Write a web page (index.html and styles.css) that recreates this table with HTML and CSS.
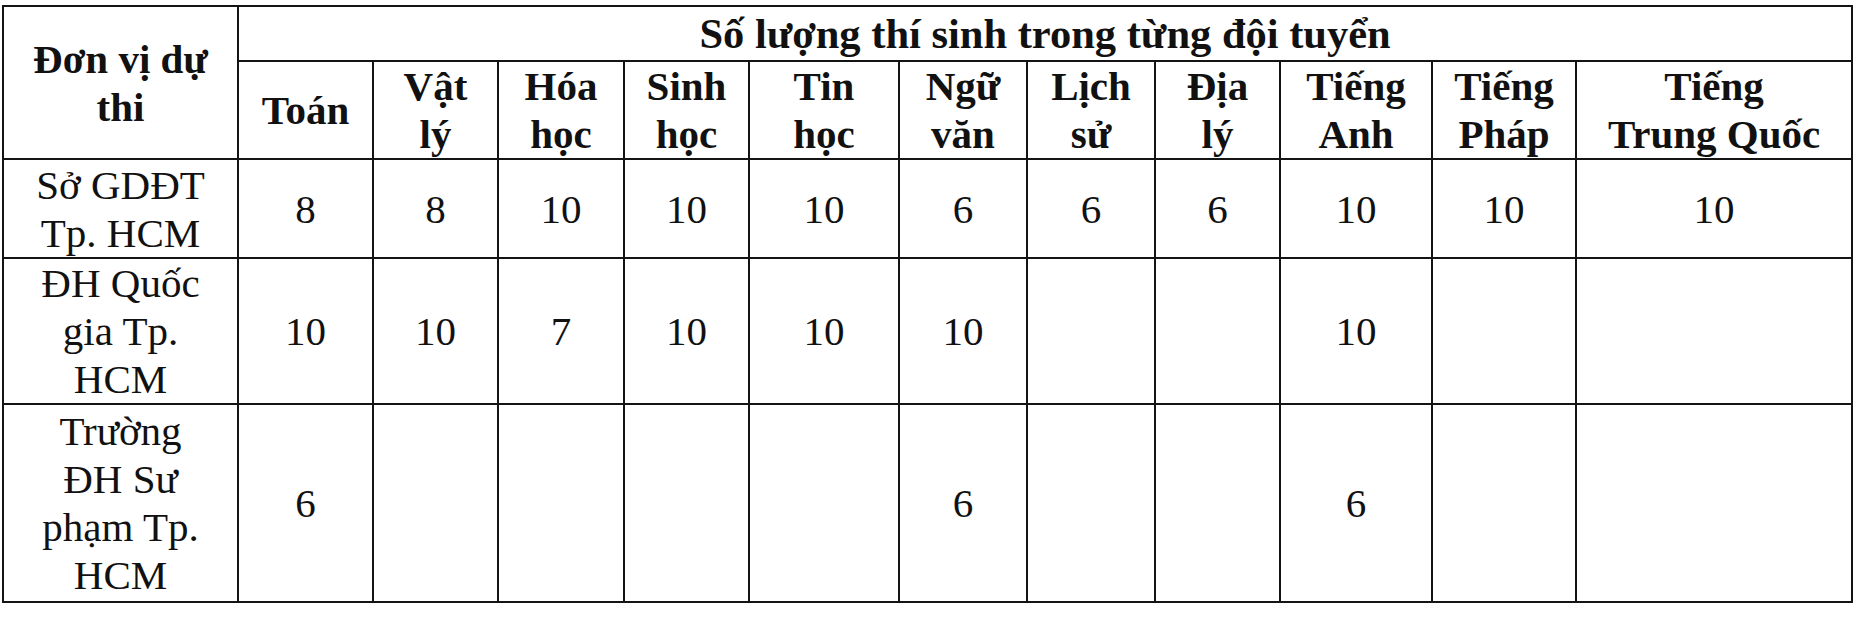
FILE: index.html
```html
<!DOCTYPE html>
<html lang="vi">
<head>
<meta charset="utf-8">
<title>Số lượng thí sinh trong từng đội tuyển</title>
<link rel="stylesheet" href="styles.css">
</head>
<body>
<div class="sheet">
<table class="grid">
<colgroup>
<col class="c-unit"><col class="c-toan"><col class="c-ly"><col class="c-hoa"><col class="c-sinh"><col class="c-tin"><col class="c-van"><col class="c-su"><col class="c-dia"><col class="c-anh"><col class="c-phap"><col class="c-trung">
</colgroup>
<tr class="r-title">
<th rowspan="2">Đơn vị dự<br>thi</th>
<th colspan="11" class="title">Số lượng thí sinh trong từng đội tuyển</th>
</tr>
<tr class="r-subj">
<th>Toán</th><th>Vật<br>lý</th><th>Hóa<br>học</th><th>Sinh<br>học</th><th>Tin<br>học</th><th>Ngữ<br>văn</th><th>Lịch<br>sử</th><th>Địa<br>lý</th><th>Tiếng<br>Anh</th><th>Tiếng<br>Pháp</th><th>Tiếng<br>Trung Quốc</th>
</tr>
<tr class="r-1">
<td>Sở GDĐT<br>Tp. HCM</td><td>8</td><td>8</td><td>10</td><td>10</td><td>10</td><td>6</td><td>6</td><td>6</td><td>10</td><td>10</td><td>10</td>
</tr>
<tr class="r-2">
<td>ĐH Quốc<br>gia Tp.<br>HCM</td><td>10</td><td>10</td><td>7</td><td>10</td><td>10</td><td>10</td><td></td><td></td><td>10</td><td></td><td></td>
</tr>
<tr class="r-3">
<td>Trường<br>ĐH Sư<br>phạm Tp.<br>HCM</td><td>6</td><td></td><td></td><td></td><td></td><td>6</td><td></td><td></td><td>6</td><td></td><td></td>
</tr>
</table>
</div>
</body>
</html>
```

FILE: styles.css
```css
html, body {
  margin: 0;
  padding: 0;
  background: #ffffff;
}

.sheet {
  padding: 5px 0 0 2px;
}

.grid {
  border-collapse: collapse;
  table-layout: fixed;
  width: 1849px;
  font-family: "Liberation Serif", "Times New Roman", serif;
  font-size: 41px;
  line-height: 48px;
  color: #111111;
}

.grid th,
.grid td {
  border: 2px solid #141414;
  padding: 0 4px;
  text-align: center;
  vertical-align: middle;
  overflow: hidden;
}

.grid th {
  font-weight: bold;
}

.grid td {
  font-weight: normal;
}

.grid .title {
  font-size: 42.5px;
}

.c-unit { width: 235px; }
.c-toan { width: 135px; }
.c-ly { width: 125px; }
.c-hoa { width: 126px; }
.c-sinh { width: 125px; }
.c-tin { width: 150px; }
.c-van { width: 128px; }
.c-su { width: 128px; }
.c-dia { width: 125px; }
.c-anh { width: 152px; }
.c-phap { width: 144px; }
.c-trung { width: 276px; }

.r-title { height: 55px; }
.r-subj { height: 97px; }
.r-1 { height: 99px; }
.r-2 { height: 146px; }
.r-3 { height: 198px; }
```
